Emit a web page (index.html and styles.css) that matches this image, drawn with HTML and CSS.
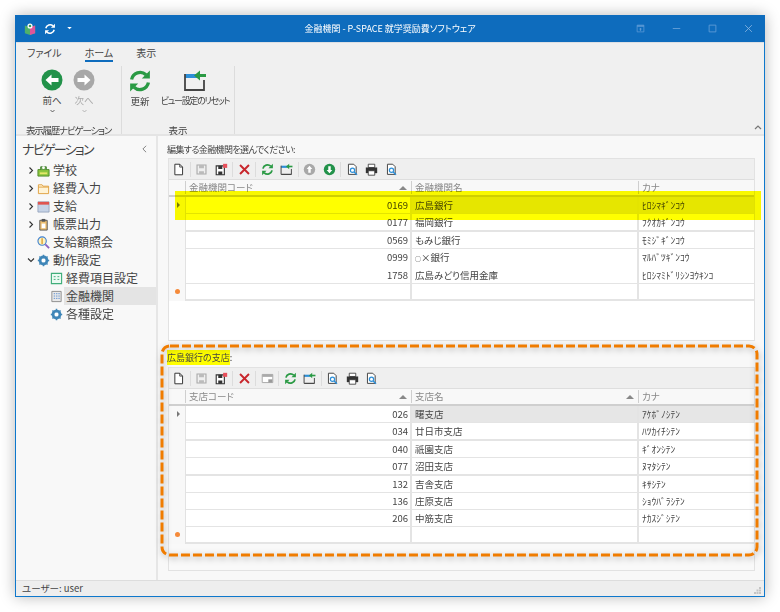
FILE: index.html
```html
<!DOCTYPE html>
<html lang="ja">
<head>
<meta charset="utf-8">
<title>金融機関 - P-SPACE 就学奨励費ソフトウェア</title>
<link rel="stylesheet" href="styles.css">
</head>
<body>
<svg class="defs" width="0" height="0">
  <defs>
    <symbol id="i-new" viewBox="0 0 16 16"><path d="M3.500 1.500h6l3.500 3.500v9.500h-9.500z" fill="#fff" stroke="#333" stroke-width="1.200"/><path d="M9.500 1.500v3.500h3.500" fill="none" stroke="#333"/></symbol>
    <symbol id="i-save" viewBox="0 0 16 16"><path d="M2.500 2.500h11v11h-11z" fill="none" stroke="#aaa" stroke-width="1.400"/><path d="M5 2.500h6v4h-6zM5 10h6v3.500h-6z" fill="#bbb"/></symbol>
    <symbol id="i-savex" viewBox="0 0 16 16"><path d="M1.500 3.500h10v11h-10z" fill="#fff" stroke="#333" stroke-width="1.400"/><path d="M4 3.500h5v4h-5zM4 10.500h5v4h-5z" fill="#333"/><path d="M10 1h5v5h-5z" fill="#e8505b"/></symbol>
    <symbol id="i-x" viewBox="0 0 16 16"><path d="M2.500 2.500l11 11M13.500 2.500l-11 11" stroke="#c8262c" stroke-width="2.400" fill="none"/></symbol>
    <symbol id="i-refresh" viewBox="0 0 16 16"><path d="M2.400 7a5.800 5.800 0 0 1 9.600-3.200" fill="none" stroke="#2a9a44" stroke-width="2.200"/><path d="M14.600 1v5.400h-5.400z" fill="#2a9a44"/><path d="M13.600 9a5.800 5.800 0 0 1-9.600 3.200" fill="none" stroke="#2a9a44" stroke-width="2.200"/><path d="M1.400 15v-5.400h5.400z" fill="#2a9a44"/></symbol>
    <symbol id="i-reset" viewBox="0 0 24 24"><path d="M2 5h12v4H2z" fill="#2d8fd8"/><path d="M2 5v16h19V11" fill="none" stroke="#444" stroke-width="1.800"/><path d="M3 21h18" stroke="#444" stroke-width="1.800"/><path d="M17 1.500l-6 5 6 5z" fill="#2a9a44"/><path d="M16 5h7v3h-7z" fill="#2a9a44"/></symbol>
    <symbol id="i-up" viewBox="0 0 16 16"><circle cx="8" cy="8" r="7" fill="#a8a8a8"/><path d="M8 3.500l3.500 4h-2v4.500h-3v-4.500h-2z" fill="#fff"/></symbol>
    <symbol id="i-down" viewBox="0 0 16 16"><circle cx="8" cy="8" r="7" fill="#22924a"/><path d="M8 12.500l3.500-4h-2v-4.500h-3v4.500h-2z" fill="#fff"/></symbol>
    <symbol id="i-preview" viewBox="0 0 16 16"><path d="M3 1.500h6.500l3 3v9.500h-9.500z" fill="#fff" stroke="#444" stroke-width="1.200"/><circle cx="8" cy="9" r="2.600" fill="#fff" stroke="#2d8fd8" stroke-width="1.500"/><path d="M10 11l3.500 3.500" stroke="#2d8fd8" stroke-width="1.800"/></symbol>
    <symbol id="i-print" viewBox="0 0 16 16"><path d="M4 1.500h8v4h-8z" fill="#fff" stroke="#333"/><path d="M1 5.500h14v7h-14z" fill="#333"/><path d="M4 9.500h8v5.500h-8z" fill="#fff" stroke="#333"/></symbol>
    <symbol id="i-layout" viewBox="0 0 16 16"><path d="M1.500 3h13v10h-13z" fill="#fff" stroke="#aaa" stroke-width="1.200"/><path d="M1.500 3h13v3h-13z" fill="#aaa"/><path d="M9 9h5v4h-5z" fill="#999"/></symbol>
    <symbol id="i-gear" viewBox="0 0 16 16"><circle cx="8" cy="8" r="4.500" fill="none" stroke="#3f86b8" stroke-width="3"/><path d="M8 1v14M1 8h14M3 3l10 10M13 3l-10 10" stroke="#3f86b8" stroke-width="1.800"/><circle cx="8" cy="8" r="2.400" fill="#fff"/></symbol>
    <symbol id="i-chev-r" viewBox="0 0 8 10"><path d="M2 1l4 4-4 4" fill="none" stroke="#333" stroke-width="1.500"/></symbol>
    <symbol id="i-chev-d" viewBox="0 0 10 8"><path d="M1 2l4 4 4-4" fill="none" stroke="#333" stroke-width="1.500"/></symbol>
  </defs>
</svg>

<div class="window">
  <header class="titlebar">
    <div class="qat">
      <svg class="qat-logo" viewBox="0 0 14 14"><path d="M1 3l6 2 6-2v9l-6 2-6-2z" fill="#4fb06a"/><path d="M7 5l6-2v9l-6 2z" fill="#e0559a"/><circle cx="7" cy="3.500" r="3" fill="#fff"/><circle cx="7" cy="3.500" r="1.500" fill="#3f9a55"/></svg>
      <svg class="qat-refresh" viewBox="0 0 16 16"><path d="M2.400 7a5.800 5.800 0 0 1 9.600-3.200" fill="none" stroke="#fff" stroke-width="2"/><path d="M14.600 1v5.400h-5.400z" fill="#fff"/><path d="M13.600 9a5.800 5.800 0 0 1-9.600 3.200" fill="none" stroke="#fff" stroke-width="2"/><path d="M1.400 15v-5.400h5.400z" fill="#fff"/></svg>
      <svg class="qat-drop" viewBox="0 0 6 4"><path d="M0 0h6l-3 3z" fill="#fff"/></svg>
    </div>
    <div class="title">金融機関 - P-SPACE 就学奨励費ソフトウェア</div>
    <div class="winctl">
      <svg class="wc" viewBox="0 0 12 12"><path d="M1.500 1.500h9v9h-9z" fill="none" stroke="#5e9bd6"/><path d="M1.500 1.500h9v2h-9zM4 7l2-2 2 2h-1.200v2h-1.600v-2z" fill="#5e9bd6"/></svg>
      <svg class="wc" viewBox="0 0 12 12"><path d="M1 6h10" stroke="#5e9bd6" stroke-width="1.300"/></svg>
      <svg class="wc" viewBox="0 0 12 12"><path d="M1.500 1.500h9v9h-9z" fill="none" stroke="#5e9bd6" stroke-width="1.200"/></svg>
      <svg class="wc" viewBox="0 0 12 12"><path d="M1.500 1.500l9 9M10.500 1.500l-9 9" stroke="#8ab6e2" stroke-width="1.100"/></svg>
    </div>
  </header>

  <section class="ribbon">
    <nav class="tabs">
      <span class="tab">ファイル</span>
      <span class="tab tab-active">ホーム</span>
      <span class="tab">表示</span>
    </nav>
    <div class="groups">
      <div class="group group-history">
        <div class="group-btns">
          <div class="rbtn rbtn-nav">
            <svg class="ico-circle" viewBox="0 0 22 22"><circle cx="11" cy="11" r="10.500" fill="#22924a"/><path d="M4.500 11l6-5.500v3.500h7v4h-7v3.500z" fill="#fff"/></svg>
            <span class="rlabel">前へ</span>
            <svg class="rchev" viewBox="0 0 10 6"><use href="#i-chev-d"/></svg>
          </div>
          <div class="rbtn rbtn-nav rbtn-off">
            <svg class="ico-circle" viewBox="0 0 22 22"><circle cx="11" cy="11" r="10.500" fill="#a8a8a8"/><path d="M17.500 11l-6-5.500v3.500h-7v4h7v3.500z" fill="#fff"/></svg>
            <span class="rlabel">次へ</span>
            <svg class="rchev" viewBox="0 0 10 6"><use href="#i-chev-d"/></svg>
          </div>
        </div>
        <div class="group-name group-name-long">表示履歴ナビゲーション</div>
      </div>
      <div class="group group-view">
        <div class="group-btns">
          <div class="rbtn rbtn-refresh">
            <svg class="ico-big"><use href="#i-refresh"/></svg>
            <span class="rlabel">更新</span>
          </div>
          <div class="rbtn rbtn-reset">
            <svg class="ico-big"><use href="#i-reset"/></svg>
            <span class="rlabel">ビュー設定のリセット</span>
          </div>
        </div>
        <div class="group-name">表示</div>
      </div>
      <svg class="collapse" viewBox="0 0 8 5"><path d="M1 4l3-3 3 3" fill="none" stroke="#777" stroke-width="1.200"/></svg>
    </div>
  </section>

  <div class="body">
    <aside class="nav">
      <div class="nav-head"><span>ナビゲーション</span><svg class="nav-back" viewBox="0 0 6 10"><path d="M5 1l-4 4 4 4" fill="none" stroke="#666"/></svg></div>
      <div class="tree-row"><svg class="tw"><use href="#i-chev-r"/></svg><svg class="ti" viewBox="0 0 14 14"><path d="M1 6h12v7h-12z" fill="#8cc63f" stroke="#4f8a2a"/><path d="M4 6v-3h6v3" fill="#6aa84f" stroke="#3d7a2a"/><circle cx="7" cy="4" r="1.500" fill="#fff"/><path d="M3 9h8v2h-8z" fill="#e5e86a"/></svg><span>学校</span></div>
      <div class="tree-row"><svg class="tw"><use href="#i-chev-r"/></svg><svg class="ti" viewBox="0 0 14 14"><path d="M1.500 3h4l1 1.500h6v8h-11z" fill="#fff3d6" stroke="#e0a040"/><path d="M1.500 5.500h11" stroke="#e0a040"/></svg><span>経費入力</span></div>
      <div class="tree-row"><svg class="tw"><use href="#i-chev-r"/></svg><svg class="ti" viewBox="0 0 14 14"><path d="M1 2h12v11h-12z" fill="#c6d3e6" stroke="#8a9ab5" stroke-width=".8"/><path d="M1 2h12v3h-12z" fill="#e0554f"/></svg><span>支給</span></div>
      <div class="tree-row"><svg class="tw"><use href="#i-chev-r"/></svg><svg class="ti" viewBox="0 0 14 14"><path d="M3 2.500h8v10.500h-8z" fill="#f0c070" stroke="#555"/><path d="M5 1h4v3h-4z" fill="#555"/><path d="M5 6h4v5h-4z" fill="#fff"/></svg><span>帳票出力</span></div>
      <div class="tree-row"><span class="tw"></span><svg class="ti" viewBox="0 0 14 14"><circle cx="5.500" cy="5.500" r="4.500" fill="#fff2c0" stroke="#3f80d0" stroke-width="1.200"/><path d="M5.500 2.500v6" stroke="#e0a030" stroke-width="1.500"/><path d="M9 9l4 4" stroke="#8a60c0" stroke-width="2"/></svg><span>支給額照会</span></div>
      <div class="tree-row"><svg class="tw tw-open"><use href="#i-chev-d"/></svg><svg class="ti"><use href="#i-gear"/></svg><span>動作設定</span></div>
      <div class="tree-row tree-child"><svg class="ti" viewBox="0 0 14 14"><path d="M1.500 1.500h11v11h-11z" fill="#eafaf2" stroke="#3fae7a" stroke-width="1.200"/><path d="M4 5h2M8 5h2M4 8h2M8 8h2" stroke="#3fae7a"/></svg><span>経費項目設定</span></div>
      <div class="tree-row tree-child tree-sel"><svg class="ti" viewBox="0 0 14 14"><path d="M2 1.500h10v11h-10z" fill="#e9e9e9" stroke="#8a8a8a"/><path d="M4 4h1.500M6.500 4h1.500M9 4h1.500M4 6.500h1.500M6.500 6.500h1.500M9 6.500h1.500M4 9h1.500M6.500 9h1.500M9 9h1.500" stroke="#5a8ed0"/></svg><span>金融機関</span></div>
      <div class="tree-row tree-child"><svg class="ti"><use href="#i-gear"/></svg><span>各種設定</span></div>
    </aside>

    <main class="main">
      <div class="label label-top">編集する金融機関を選んでください:</div>
      <section class="panel panel-bank">
        <div class="toolbar">
          <svg class="tb"><use href="#i-new"/></svg><i class="sep"></i>
          <svg class="tb"><use href="#i-save"/></svg><svg class="tb"><use href="#i-savex"/></svg><i class="sep"></i>
          <svg class="tb"><use href="#i-x"/></svg><i class="sep"></i>
          <svg class="tb"><use href="#i-refresh"/></svg><svg class="tb"><use href="#i-reset"/></svg><i class="sep"></i>
          <svg class="tb"><use href="#i-up"/></svg><svg class="tb"><use href="#i-down"/></svg><i class="sep"></i>
          <svg class="tb"><use href="#i-preview"/></svg><svg class="tb"><use href="#i-print"/></svg><svg class="tb"><use href="#i-preview"/></svg>
        </div>
        <div class="gr gr-head"><div class="hc"></div><div class="hc"><span>金融機関コード</span><b class="sort"></b></div><div class="hc"><span>金融機関名</span></div><div class="hc"><span>カナ</span></div></div>
        <div class="gr gr-sel"><div class="ind"><b class="cur"></b></div><div class="num num-focus">0169</div><div class="cell">広島銀行</div><div class="cell">ﾋﾛｼﾏｷﾞﾝｺｳ</div></div>
        <div class="gr"><div class="ind"></div><div class="num">0177</div><div class="cell">福岡銀行</div><div class="cell">ﾌｸｵｶｷﾞﾝｺｳ</div></div>
        <div class="gr"><div class="ind"></div><div class="num">0569</div><div class="cell">もみじ銀行</div><div class="cell">ﾓﾐｼﾞｷﾞﾝｺｳ</div></div>
        <div class="gr"><div class="ind"></div><div class="num">0999</div><div class="cell"><span class="tiny">○</span>×銀行</div><div class="cell">ﾏﾙﾊﾞﾂｷﾞﾝｺｳ</div></div>
        <div class="gr"><div class="ind"></div><div class="num">1758</div><div class="cell">広島みどり信用金庫</div><div class="cell">ﾋﾛｼﾏﾐﾄﾞﾘｼﾝﾖｳｷﾝｺ</div></div>
        <div class="gr"><div class="ind"><b class="star"></b></div><div class="num"></div><div class="cell"></div><div class="cell"></div></div>
      </section>

      <div class="label label-branch"><mark class="mark">広島銀行の支店</mark>:</div>
      <section class="panel panel-branch">
        <div class="toolbar">
          <svg class="tb"><use href="#i-new"/></svg><i class="sep"></i>
          <svg class="tb"><use href="#i-save"/></svg><svg class="tb"><use href="#i-savex"/></svg><i class="sep"></i>
          <svg class="tb"><use href="#i-x"/></svg><i class="sep"></i>
          <svg class="tb"><use href="#i-layout"/></svg><i class="sep"></i>
          <svg class="tb"><use href="#i-refresh"/></svg><svg class="tb"><use href="#i-reset"/></svg><i class="sep"></i>
          <svg class="tb"><use href="#i-preview"/></svg><svg class="tb"><use href="#i-print"/></svg><svg class="tb"><use href="#i-preview"/></svg>
        </div>
        <div class="gr gr-head"><div class="hc"></div><div class="hc"><span>支店コード</span><b class="sort"></b></div><div class="hc"><span>支店名</span><b class="sort"></b></div><div class="hc"><span>カナ</span></div></div>
        <div class="gr gr-sel"><div class="ind"><b class="cur"></b></div><div class="num num-focus">026</div><div class="cell">曙支店</div><div class="cell">ｱｹﾎﾞﾉｼﾃﾝ</div></div>
        <div class="gr"><div class="ind"></div><div class="num">034</div><div class="cell">廿日市支店</div><div class="cell">ﾊﾂｶｲﾁｼﾃﾝ</div></div>
        <div class="gr"><div class="ind"></div><div class="num">040</div><div class="cell">祇園支店</div><div class="cell">ｷﾞｵﾝｼﾃﾝ</div></div>
        <div class="gr"><div class="ind"></div><div class="num">077</div><div class="cell">沼田支店</div><div class="cell">ﾇﾏﾀｼﾃﾝ</div></div>
        <div class="gr"><div class="ind"></div><div class="num">132</div><div class="cell">吉舎支店</div><div class="cell">ｷｻｼﾃﾝ</div></div>
        <div class="gr"><div class="ind"></div><div class="num">136</div><div class="cell">庄原支店</div><div class="cell">ｼｮｳﾊﾞﾗｼﾃﾝ</div></div>
        <div class="gr"><div class="ind"></div><div class="num">206</div><div class="cell">中筋支店</div><div class="cell">ﾅｶｽｼﾞｼﾃﾝ</div></div>
        <div class="gr"><div class="ind"><b class="star"></b></div><div class="num"></div><div class="cell"></div><div class="cell"></div></div>
      </section>
    </main>
  </div>

  <footer class="status">
    <span>ユーザー: user</span>
    <svg class="grip" viewBox="0 0 7 7"><path d="M5 0h2v2h-2zM2.500 2.500h2v2h-2zM5 2.500h2v2h-2zM0 5h2v2h-2zM2.500 5h2v2h-2zM5 5h2v2h-2z" fill="#c4c4c4"/></svg>
  </footer>

  <div class="band"></div>
  <svg class="callout" viewBox="0 0 604 218"><rect x="3" y="3" width="595" height="209" rx="8" fill="none" stroke="#f07c00" stroke-width="3" stroke-dasharray="9 3"/></svg>
</div>
</body>
</html>
```

FILE: styles.css
```css
* { box-sizing: border-box; }
html, body { margin: 0; height: 100%; }
body {
  background: #fff;
  font-family: "Noto Sans CJK JP", "Noto Sans", sans-serif;
  font-feature-settings: "palt";
  color: #444;
  font-size: 9.5px;
  overflow: hidden;
  padding: 15px;
}
.defs { position: absolute; }
svg { display: block; flex: none; }

.window {
  position: relative;
  width: 750px;
  height: 582px;
  background: #f8f8f8;
  border: 1px solid #0e78cc;
  border-top: 0;
  display: flex;
  flex-direction: column;
  box-shadow: 0 0 14px rgba(0,0,0,.28);
  filter: blur(.3px);
}

/* title bar */
.titlebar {
  height: 27px;
  margin: 0 -1px;
  background: #0e6cbd;
  display: flex;
  align-items: center;
  position: relative;
  flex: none;
}
.qat { display: flex; align-items: center; padding-left: 9px; }
.qat-logo { width: 12px; height: 12px; }
.qat-refresh { width: 12px; height: 12px; margin-left: 8px; }
.qat-drop { width: 5px; height: 3px; margin-left: 11px; }
.title {
  position: absolute;
  left: 0; right: 0;
  text-align: center;
  color: #fff;
  font-size: 9px;
  line-height: 27px;
}
.winctl { margin-left: auto; display: flex; align-items: center; padding-right: 12px; gap: 27px; }
.wc { width: 9px; height: 9px; }

/* ribbon */
.ribbon {
  height: 94px;
  background: #f0f0f0;
  border-bottom: 2px solid #e4e4e4;
  border-top: 1px solid #dcdfe4;
  flex: none;
  display: flex;
  flex-direction: column;
}
.tabs { display: flex; padding-left: 11px; gap: 23px; height: 23px; font-size: 10px; line-height: 19px; flex: none; }
.tab { height: 19px; }
.tab-active { border-bottom: 2px solid #0e6cbd; height: 19px; line-height: 19px; }
.groups { display: flex; flex: 1; position: relative; min-height: 0; }
.group { display: flex; flex-direction: column; border-right: 1px solid #dcdcdc; }
.group-history { width: 106px; }
.group-view { width: 113px; }
.group-btns { flex: 1; display: flex; }
.group-history .group-btns { padding-left: 20px; }
.group-view .group-btns { padding-left: 4px; }
.group-name { text-align: center; font-size: 9.5px; line-height: 12px; height: 10px; color: #444; white-space: nowrap; }
.group-name-long { letter-spacing: -1.2px; }
.rbtn { display: flex; flex-direction: column; align-items: center; padding-top: 2px; }
.rbtn-nav { width: 32px; padding-top: 3px; }
.rbtn-off { color: #aaa; }
.rbtn-refresh { width: 28px; }
.rbtn-reset { width: 72px; margin-left: 5px; }
.rlabel { font-size: 9.5px; line-height: 12px; margin-top: 3px; white-space: nowrap; }
.rbtn-refresh .rlabel, .rbtn-reset .rlabel { margin-top: 1px; }
.rbtn-reset .rlabel { font-size: 9px; letter-spacing: -1.3px; }
.ico-circle { width: 22px; height: 22px; }
.ico-big { width: 24px; height: 26px; }
.rchev { width: 7px; height: 4px; margin-top: 3px; }
.rbtn-off .rchev { opacity: .4; }
.collapse { position: absolute; right: 2px; bottom: 4px; width: 8px; height: 5px; }

/* body */
.body { flex: 1; display: flex; min-height: 0; }
.nav { width: 142px; border-right: 2px solid #e6e6e6; flex: none; background: #f8f8f8; }
.nav-head {
  height: 25px;
  padding: 0 9px 0 6px;
  font-size: 13px;
  letter-spacing: -1.7px;
  line-height: 20px;
  display: flex;
  align-items: center;
  justify-content: space-between;
}
.nav-back { width: 5px; height: 8px; }
.tree-row { display: flex; align-items: center; height: 18px; font-size: 12px; line-height: 18px; }
.tw { width: 6px; height: 9px; margin-left: 12px; margin-right: 3px; flex: none; }
.tw-open { width: 8px; height: 6px; margin-left: 11px; margin-right: 2px; }
.ti { width: 13px; height: 13px; margin-right: 3px; flex: none; }
.tree-row span:last-child { white-space: nowrap; }
.tree-child { margin-left: 34px; }
.tree-sel { background: #e4e4e4; margin-left: 48px; }
.tree-sel .ti { margin-left: -14px; }

/* main */
.main { flex: 1; padding: 7px 9px 9px 10px; display: flex; flex-direction: column; min-width: 0; }
.label { font-size: 9px; line-height: 14px; height: 15px; white-space: nowrap; }
.label-top { margin-left: -1px; letter-spacing: -.6px; }
.label-branch { margin-top: 9px; height: 17px; line-height: 16px; margin-left: -1px; }
.mark { background: #ffff00; color: #444; padding: 1px 0; }
.panel { border: 1px solid #e2e2e2; background: #fff; }
.panel-bank { height: 183px; }
.panel-branch { flex: 1; background: #f9f9f9; }

.toolbar { height: 20px; background: #efefef; display: flex; align-items: center; }
.tb { width: 13px; height: 13px; margin: 0 3.25px; flex: none; }
.sep { width: 1px; height: 15px; background: #dcdcdc; margin: 0 1.25px; flex: none; }

.gr { display: grid; grid-template-columns: 17px 226px 227px 1fr; height: 17px; line-height: 16px; }
.gr:nth-child(4), .gr:nth-child(6) { height: 18px; }
.gr-head { height: 18px; border-top: 1px solid #dedede; border-bottom: 2px solid #cfcfcf; background: #f8f8f8; color: #888; line-height: 13px; }
.hc { position: relative; padding-left: 3px; border-right: 1px solid #cfcfcf; white-space: nowrap; margin: 1px 0 1px; }
.hc:last-child { border-right: 0; }
.sort { position: absolute; right: 4px; top: 5px; border: 4px solid transparent; border-top: 0; border-bottom: 4px solid #888; }
.ind { background: #f8f8f8; border-right: 1px solid #e2e2e2; position: relative; }
.num, .cell { background: #fff; border-right: 2px solid #e4e4e4; border-bottom: 2px solid #e4e4e4; }
.cell:last-child { border-right: 0; }
.num { text-align: right; padding-right: 2px; }
.cell { padding-left: 3px; white-space: nowrap; }
.tiny { font-size: 6px; }
.gr-sel .cell { background: #e6e6e6; }
.cur { position: absolute; left: 8px; top: 5px; border: 3px solid transparent; border-left: 3px solid #777; border-right: 0; }
.star { position: absolute; left: 6px; top: 5px; width: 5px; height: 5px; border-radius: 50%; background: #f58a3a; }

/* status */
.status {
  height: 16px;
  background: #eee;
  border-top: 1px solid #ddd;
  padding-left: 6px;
  font-size: 9.5px;
  line-height: 15px;
  position: relative;
  flex: none;
}
.grip { position: absolute; right: 3px; bottom: 2px; width: 7px; height: 7px; }

/* annotation overlays */
.band {
  position: absolute;
  left: 159px; top: 176px;
  width: 586px; height: 29px;
  background: #ffff00;
  mix-blend-mode: multiply;
}
.callout {
  position: absolute;
  left: 143px; top: 328px;
  width: 604px; height: 218px;
  filter: drop-shadow(1px 2px 3px rgba(0,0,0,.3));
}
```
